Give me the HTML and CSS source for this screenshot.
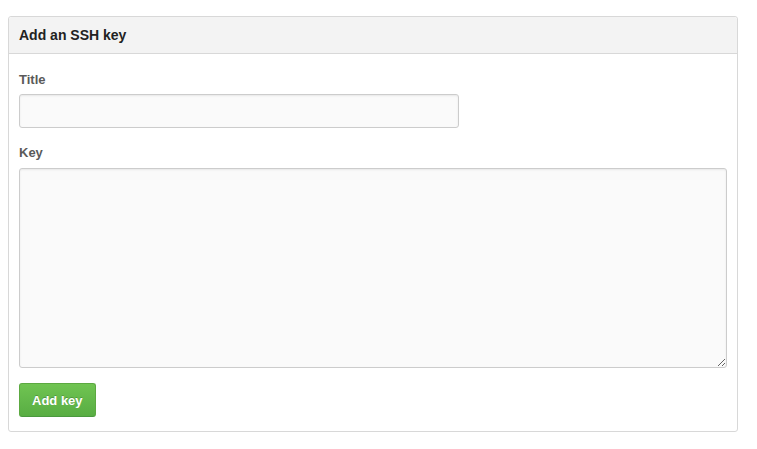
FILE: index.html
```html
<!DOCTYPE html>
<html>
<head>
<meta charset="utf-8">
<link rel="stylesheet" href="styles.css">
</head>
<body>
<div class="panel">
  <div class="panel-head">Add an SSH key</div>
  <form class="panel-body">
    <label class="label" for="t">Title</label>
    <input class="field title-field" id="t" type="text">
    <label class="label key-label" for="k">Key</label>
    <textarea class="field key-field" id="k"></textarea>
    <button class="btn" type="button">Add key</button>
  </form>
</div>
</body>
</html>
```
FILE: styles.css
```css
body {
  margin: 8px;
  font-family: "Liberation Sans", Arial, sans-serif;
  background: #fff;
  color: #333;
}
.panel {
  margin-top: 8px;
  width: 730px;
  box-sizing: border-box;
  border: 1px solid #d8d8d8;
  border-radius: 3px;
  background: #fff;
}
.panel-head {
  height: 37px;
  box-sizing: border-box;
  padding: 0 10px 1px;
  display: flex;
  align-items: center;
  background: #f3f3f3;
  border-bottom: 1px solid #d8d8d8;
  font-size: 14px;
  font-weight: bold;
  color: #222;
  border-radius: 3px 3px 0 0;
}
.panel-body {
  display: flex;
  flex-direction: column;
  align-items: flex-start;
  padding: 17px 10px 14px;
  margin: 0;
}
.label {
  font-size: 13px;
  line-height: 18px;
  font-weight: bold;
  color: #5a5a5a;
  margin-bottom: 5px;
}
.key-label {
  margin-top: 16px;
  margin-bottom: 6px;
}
.field {
  box-sizing: border-box;
  border: 1px solid #ccc;
  border-radius: 3px;
  background: #fafafa;
  box-shadow: inset 0 1px 2px rgba(0,0,0,0.075);
  font-family: inherit;
  font-size: 13px;
  margin: 0;
  padding: 7px 8px;
  outline: none;
}
.title-field {
  width: 440px;
  height: 34px;
}
.key-field {
  width: 708px;
  height: 200px;
  resize: vertical;
}
.btn {
  margin-top: 15px;
  height: 34px;
  padding: 0 12px;
  box-sizing: border-box;
  border: 1px solid #5ca941;
  border-bottom-color: #4a993e;
  border-radius: 3px;
  background: linear-gradient(#70c452, #58ad43);
  color: #fff;
  font-family: inherit;
  font-size: 13px;
  font-weight: bold;
  text-shadow: 0 -1px 0 rgba(0,0,0,0.2);
  cursor: pointer;
}
```
